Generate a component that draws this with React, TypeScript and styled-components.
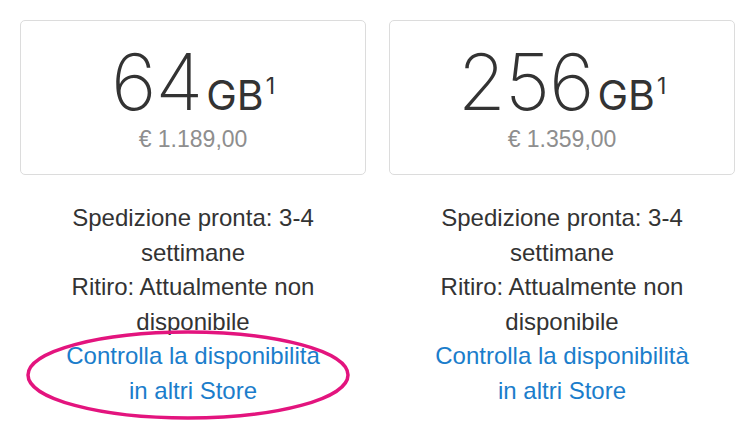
import React from 'react';
import styled, { createGlobalStyle } from 'styled-components';

const GlobalStyle = createGlobalStyle`
  html, body {
    margin: 0;
    padding: 0;
    background: #ffffff;
  }
  body {
    font-family: 'Liberation Sans', Arial, sans-serif;
    -webkit-font-smoothing: antialiased;
  }
`;

const Page = styled.div`
  width: 750px;
  height: 432px;
  overflow: hidden;
  box-sizing: border-box;
  padding: 20px 16px 0 20px;
  display: grid;
  grid-template-columns: 346px 346px;
  column-gap: 23px;
  align-items: start;
`;

const Column = styled.div`
  display: flex;
  flex-direction: column;
  align-items: stretch;
`;

const Card = styled.div`
  box-sizing: border-box;
  width: 100%;
  height: 155px;
  border: 1px solid #dcdcdc;
  border-radius: 5px;
  display: flex;
  flex-direction: column;
  align-items: center;
  padding-top: 22px;
`;

const Capacity = styled.div`
  display: flex;
  align-items: baseline;
  color: #333333;
  font-family: Inter, Roboto, 'Liberation Sans', sans-serif;
  line-height: 1;
`;

const Amount = styled.span`
  font-size: 78px;
  font-weight: 200;
  letter-spacing: -1px;
`;

const Unit = styled.span`
  font-size: 41px;
  font-weight: 400;
  margin-left: 4px;
`;

const Note = styled.sup`
  font-size: 23px;
  font-weight: 400;
  align-self: flex-start;
  margin-top: 32px;
  margin-left: 2px;
  vertical-align: baseline;
  line-height: 1;
`;

const Price = styled.div`
  margin-top: 5px;
  font-size: 23px;
  color: #8e8e8e;
  font-family: 'Liberation Sans', Arial, sans-serif;
`;

const Info = styled.div`
  margin-top: 26px;
  text-align: center;
  font-size: 24px;
  line-height: 34.5px;
  color: #333333;
`;

const Line = styled.div``;

const StoreLink = styled.a`
  position: relative;
  display: block;
  color: #1b7dcb;
  text-decoration: none;
  text-align: center;
`;

const Circle = styled.svg`
  position: absolute;
  left: 0;
  top: -10px;
  width: 346px;
  height: 96px;
  overflow: visible;
  pointer-events: none;
`;

interface Option {
  size: string;
  price: string;
  marked?: boolean;
}

const options: Option[] = [
  { size: '64', price: '€ 1.189,00', marked: true },
  { size: '256', price: '€ 1.359,00' },
];

const App: React.FC = () => {
  return (
    <>
      <GlobalStyle />
      <Page>
        {options.map((o) => (
          <Column key={o.size}>
            <Card>
              <Capacity>
                <Amount>{o.size}</Amount>
                <Unit>GB</Unit>
                <Note>1</Note>
              </Capacity>
              <Price>{o.price}</Price>
            </Card>
            <Info>
              <Line>Spedizione pronta: 3-4</Line>
              <Line>settimane</Line>
              <Line>Ritiro: Attualmente non</Line>
              <Line>disponibile</Line>
              <StoreLink href="#">
                Controlla la disponibilità
                <br />
                in altri Store
                {o.marked && (
                  <Circle viewBox="0 0 346 96">
                    <ellipse
                      cx="168"
                      cy="46"
                      rx="160"
                      ry="43"
                      fill="none"
                      stroke="#e3147e"
                      strokeWidth="3.5"
                    />
                  </Circle>
                )}
              </StoreLink>
            </Info>
          </Column>
        ))}
      </Page>
    </>
  );
};

export default App;
